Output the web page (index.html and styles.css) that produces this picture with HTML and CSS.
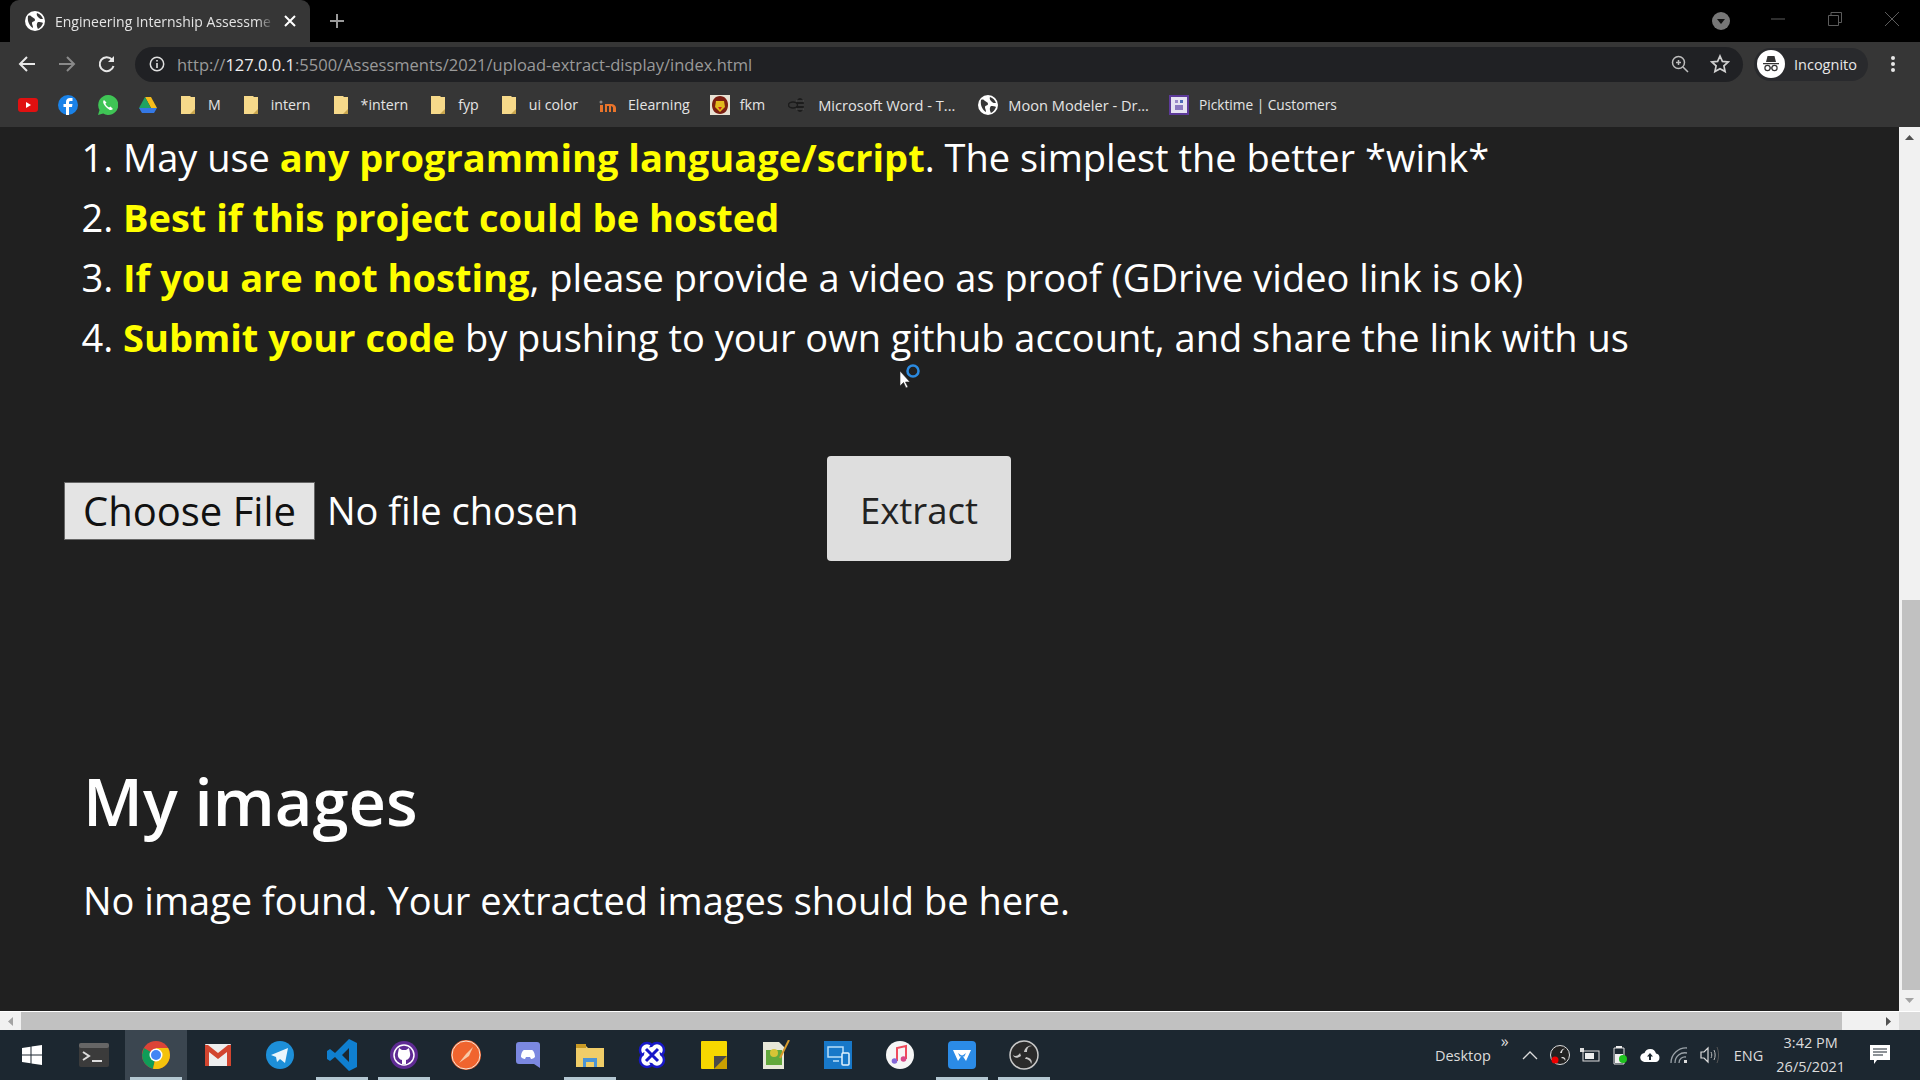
FILE: index.html
```html
<!DOCTYPE html>
<html lang="en">
<head>
    <meta charset="UTF-8">
    <title>Engineering Internship Assessment</title>
    <link rel="stylesheet" href="styles.css">
</head>
<body>
<svg class="defs" width="0" height="0">
    <symbol id="globe" viewBox="0 0 20 20">
        <circle cx="10" cy="10" r="10" fill="#fff"/>
        <path d="M3 5c2-1 3 0 4 1s3 1 3 3-3 1-3 3 1 2 1 5C5 15 2 11 3 5zM12 2c3 1 5 3 6 6-2 0-3 0-4-1s-3-3-2-5zM13 11c2 0 4 0 5 1-1 3-3 5-5 6-1-2-2-5 0-7z" fill="#363636"/>
    </symbol>
    <symbol id="folder" viewBox="0 0 20 20">
        <path d="M3 1h9l1 1h4v17H3z" fill="#f6d98a"/>
        <path d="M17 14v5h-5z" fill="#c9a64e"/>
    </symbol>
</svg>

<div class="tabstrip">
    <div class="tab">
        <svg class="favicon" width="20" height="20"><use href="#globe"/></svg>
        <span class="tab-title">Engineering Internship Assessme</span>
        <svg class="tab-close" width="12" height="12" viewBox="0 0 12 12"><path d="M1 1l10 10M11 1L1 11" stroke="#fff" stroke-width="2"/></svg>
    </div>
    <svg class="new-tab" width="16" height="16" viewBox="0 0 16 16"><path d="M8 1v14M1 8h14" stroke="#9a9a9a" stroke-width="2"/></svg>
    <svg class="tab-search" width="18" height="18" viewBox="0 0 18 18"><circle cx="9" cy="9" r="9" fill="#777"/><path d="M5 7h8l-4 5z" fill="#111"/></svg>
    <div class="win-buttons">
        <svg width="14" height="14" viewBox="0 0 14 14"><path d="M0 7h14" stroke="#5c5c5c"/></svg>
        <svg width="14" height="14" viewBox="0 0 14 14"><path d="M.5 3.500h10v10H.500zM3 3.500V.500h10.500v10h-3" fill="none" stroke="#5c5c5c"/></svg>
        <svg width="14" height="14" viewBox="0 0 14 14"><path d="M0 0l14 14M14 0L0 14" stroke="#5c5c5c"/></svg>
    </div>
</div>

<div class="toolbar">
    <svg class="nav-icon" width="18" height="18" viewBox="0 0 18 18"><path d="M17 9H2M9 2L2 9l7 7" fill="none" stroke="#e8e8e8" stroke-width="2"/></svg>
    <svg class="nav-icon" width="18" height="18" viewBox="0 0 18 18"><path d="M1 9h15M9 2l7 7-7 7" fill="none" stroke="#8a8a8a" stroke-width="2"/></svg>
    <svg class="nav-icon" width="18" height="18" viewBox="0 0 18 18"><path d="M15.500 11A7 7 0 1 1 14 4.500" fill="none" stroke="#e8e8e8" stroke-width="2"/><path d="M16 1v6h-6z" fill="#e8e8e8"/></svg>
    <div class="omnibox">
        <svg class="info" width="16" height="16" viewBox="0 0 16 16"><circle cx="8" cy="8" r="6.700" fill="none" stroke="#e0e0e0" stroke-width="1.500"/><path d="M8 7v5M8 4v1.600" stroke="#e0e0e0" stroke-width="1.600"/></svg>
        <span class="url">http://<b>127.0.0.1</b>:5500/Assessments/2021/upload-extract-display/index.html</span>
        <svg class="zoom-icon" width="18" height="18" viewBox="0 0 18 18"><circle cx="7.500" cy="7.500" r="6" fill="none" stroke="#bdbdbd" stroke-width="1.500"/><path d="M12 12l5 5M5 7.500h5M7.500 5v5" stroke="#bdbdbd" stroke-width="1.500"/></svg>
        <svg class="star" width="20" height="20" viewBox="0 0 20 20"><path d="M10 2l2.400 5.400 5.800.6-4.300 3.900 1.200 5.700L10 14.700l-5.100 2.900 1.200-5.700L1.800 8l5.800-.6z" fill="none" stroke="#d0d0d0" stroke-width="1.700"/></svg>
    </div>
    <div class="profile">
        <svg width="28" height="28" viewBox="0 0 28 28"><circle cx="14" cy="14" r="14" fill="#fff"/><path d="M9 12l1.500-6h7l1.500 6zM6 13h16v1.300H6z" fill="#333"/><circle cx="10.500" cy="18" r="2.600" fill="none" stroke="#333" stroke-width="1.200"/><circle cx="17.500" cy="18" r="2.600" fill="none" stroke="#333" stroke-width="1.200"/><path d="M13 18h2" stroke="#333"/></svg>
        <span>Incognito</span>
    </div>
    <svg class="kebab" width="4" height="16" viewBox="0 0 4 16"><circle cx="2" cy="2" r="2" fill="#e8e8e8"/><circle cx="2" cy="8" r="2" fill="#e8e8e8"/><circle cx="2" cy="14" r="2" fill="#e8e8e8"/></svg>
</div>

<div class="bookmarks">
    <svg class="bm-icon" width="20" height="20" viewBox="0 0 20 20"><rect y="3" width="20" height="14" rx="3" fill="#e01010"/><path d="M8 7l5 3-5 3z" fill="#fff"/></svg>
    <svg class="bm-icon" width="20" height="20" viewBox="0 0 20 20"><circle cx="10" cy="10" r="10" fill="#1a82e8"/><path d="M11 20v-8h3l.5-3H11V7.500c0-1 .5-1.500 1.500-1.500h2V3h-2.500C9.500 3 8 4.500 8 7v2H5.500v3H8v8z" fill="#fff"/></svg>
    <svg class="bm-icon" width="20" height="20" viewBox="0 0 20 20"><path d="M10 0a10 10 0 0 0-8.500 15L0 20l5.200-1.400A10 10 0 1 0 10 0z" fill="#3fc455"/><path d="M6 5c-2 2 0 5 2.500 7.500S13 16 15 14l-2.500-2.500-1.500 1c-1.500-.7-3-2.200-3.700-3.700L8.500 7.500z" fill="#fff"/></svg>
    <svg class="bm-icon" width="20" height="20" viewBox="0 0 20 20"><path d="M7 2h6l6 11h-6z" fill="#f5bc1c"/><path d="M7 2l6 11-3 5-9-5z" fill="#1ea362"/><path d="M1 13h18l-3 5H4z" fill="#3478e5"/></svg>
    <div class="bm"><svg width="20" height="20"><use href="#folder"/></svg><span>M</span></div>
    <div class="bm"><svg width="20" height="20"><use href="#folder"/></svg><span>intern</span></div>
    <div class="bm"><svg width="20" height="20"><use href="#folder"/></svg><span>*intern</span></div>
    <div class="bm"><svg width="20" height="20"><use href="#folder"/></svg><span>fyp</span></div>
    <div class="bm"><svg width="20" height="20"><use href="#folder"/></svg><span>ui color</span></div>
    <div class="bm"><svg width="20" height="20" viewBox="0 0 20 20"><circle cx="3" cy="7" r="1.500" fill="#888"/><path d="M2 10h3v7H2z" fill="#e9742b"/><path d="M7 17V9h6c3 0 5 2 5 4v4h-3v-4c0-1-1-2-2-2v6h-2v-6H9v6z" fill="#e9742b"/></svg><span>Elearning</span></div>
    <div class="bm"><svg width="20" height="20" viewBox="0 0 20 20"><rect width="20" height="20" fill="#e8e2d4"/><path d="M10 1c5 0 8 4 8 9s-3 9-8 9-8-4-8-9 3-9 8-9z" fill="#7b1f12"/><path d="M6 6h8l1 6-5 5-5-5z" fill="#e3b81e"/><path d="M8 12h4l-2 3z" fill="#c22"/></svg><span>fkm</span></div>
    <div class="bm bm-long"><svg width="20" height="20" viewBox="0 0 20 20"><ellipse cx="12" cy="10" rx="4" ry="7" fill="#1c1c1c"/><path d="M8 6h8M8 10h8M8 14h8" stroke="#555"/><ellipse cx="5" cy="10" rx="4.500" ry="3" fill="none" stroke="#1c1c1c" stroke-width="1.500"/></svg><span>Microsoft Word - T...</span></div>
    <div class="bm bm-long"><svg width="20" height="20"><use href="#globe"/></svg><span>Moon Modeler - Dr...</span></div>
    <div class="bm bm-narrow"><svg width="20" height="20" viewBox="0 0 20 20"><rect x="1" y="1" width="18" height="18" fill="#e6e3f2" stroke="#5d3a9a" stroke-width="2"/><rect x="6" y="5" width="3" height="3" fill="#9b8ac9"/><rect x="11" y="5" width="3" height="3" fill="#4f6bb8"/><rect x="6" y="10" width="8" height="5" fill="#8a78c0"/></svg><span>Picktime | Customers</span></div>
</div>

<div class="viewport">
    <main class="page">
        <ol class="rules">
            <li>May use <strong>any programming language/script</strong>. The simplest the better *wink*</li>
            <li><strong>Best if this project could be hosted</strong></li>
            <li><strong>If you are not hosting</strong>, please provide a video as proof (GDrive video link is ok)</li>
            <li><strong>Submit your code</strong> by pushing to your own github account, and share the link with us</li>
        </ol>
        <form class="upload">
            <div class="file-field">
                <button type="button" class="file-btn">Choose File</button>
                <span class="file-name">No file chosen</span>
            </div>
            <button type="button" class="extract-btn">Extract</button>
        </form>
        <h2 class="images-title">My images</h2>
        <p class="images-empty">No image found. Your extracted images should be here.</p>
    </main>
    <div class="vscroll">
        <svg class="arrow" width="21" height="21" viewBox="0 0 21 21"><path d="M6 13l4.500-5 4.500 5z" fill="#505050"/></svg>
        <div class="vthumb"></div>
        <svg class="arrow" width="21" height="21" viewBox="0 0 21 21"><path d="M6 8l4.500 5 4.500-5z" fill="#a3a3a3"/></svg>
    </div>
</div>
<div class="hscroll">
    <svg class="arrow" width="21" height="19" viewBox="0 0 21 19"><path d="M13 5l-5 4.500 5 4.500z" fill="#a3a3a3"/></svg>
    <div class="hthumb"></div>
    <svg class="arrow" width="21" height="19" viewBox="0 0 21 19"><path d="M8 5l5 4.500-5 4.500z" fill="#505050"/></svg>
    <div class="corner"></div>
</div>

<footer class="taskbar">
    <div class="task"><svg width="20" height="20" viewBox="0 0 20 20"><path d="M0 3l8.500-1.200v7.600H0zM9.500 1.600L20 0v9.400H9.500zM0 10.500h8.500v7.700L0 17zM9.500 10.500H20V20L9.500 18.400z" fill="#fff"/></svg></div>
    <div class="task"><svg width="30" height="24" viewBox="0 0 30 24"><rect width="30" height="24" rx="2" fill="#3b3b3b"/><rect width="30" height="5" rx="2" fill="#666"/><path d="M4 9l6 4-6 4" fill="none" stroke="#ddd" stroke-width="2"/><path d="M13 18h10" stroke="#ddd" stroke-width="2"/></svg></div>
    <div class="task is-open is-active"><svg width="28" height="28" viewBox="0 0 28 28"><circle cx="14" cy="14" r="14" fill="#db4437"/><path d="M14 14L1.900 7 0 14a14 14 0 0 0 11 13.700z" fill="#0f9d58"/><path d="M14 14l-3 13.700A14 14 0 0 0 28 14a14 14 0 0 0-1.900-7H14z" fill="#f4c20d"/><circle cx="14" cy="14" r="6.500" fill="#fff"/><circle cx="14" cy="14" r="5" fill="#4285f4"/></svg></div>
    <div class="task"><svg width="26" height="22" viewBox="0 0 26 22"><rect width="26" height="22" rx="1" fill="#eee"/><path d="M0 1v21h4V8l9 7 9-7v14h4V1h-3l-10 8L3 1z" fill="#d2452f"/></svg></div>
    <div class="task"><svg width="28" height="28" viewBox="0 0 28 28"><circle cx="14" cy="14" r="14" fill="#1d8fd8"/><path d="M5 14l17-7-3 15-5-4-3 3-1-5z" fill="#e9f5fc"/></svg></div>
    <div class="task is-open"><svg width="30" height="32" viewBox="0 0 30 32"><path d="M22 0l8 4v24l-8 4L8 18l-5 4-3-2v-8l3-2 5 4zm0 9l-7 7 7 7z" fill="#0f7fd0"/></svg></div>
    <div class="task is-open"><svg width="28" height="28" viewBox="0 0 28 28"><circle cx="14" cy="14" r="14" fill="#5f2b94"/><circle cx="14" cy="14" r="10" fill="none" stroke="#fff" stroke-width="1.500"/><path d="M9 7l3 2h4l3-2 1 5c1 4-2 7-4 7v4h-4v-4c-2 0-5-3-4-7z" fill="#fff"/></svg></div>
    <div class="task"><svg width="30" height="30" viewBox="0 0 30 30"><circle cx="15" cy="15" r="15" fill="#f0642e"/><circle cx="15" cy="15" r="14" fill="none" stroke="#f4e6da"/><path d="M8 23l7-9 7-7-4 9z" fill="#f7c9a8"/></svg></div>
    <div class="task"><svg width="24" height="26" viewBox="0 0 24 26"><path d="M3 0h18a3 3 0 0 1 3 3v23l-6-4H3a3 3 0 0 1-3-3V3a3 3 0 0 1 3-3z" fill="#7b88e0"/><path d="M5 15c0-4 2-7 3-7h8c1 0 3 3 3 7-2 2-4 2-4 2l-1-2h-4l-1 2s-2 0-4-2z" fill="#fff"/></svg></div>
    <div class="task is-open"><svg width="28" height="24" viewBox="0 0 28 24"><path d="M0 3h10l2 2h16v19H0z" fill="#f0cd68"/><path d="M7 15h14v9h-3v-5h-8v5H7z" fill="#4b94d6"/><path d="M0 1h10v4H0z" fill="#c99a25"/></svg></div>
    <div class="task"><svg width="28" height="30" viewBox="0 0 28 30"><circle cx="9" cy="10" r="7" fill="#fff" stroke="#1818c8" stroke-width="2.500"/><circle cx="19" cy="10" r="7" fill="#fff" stroke="#1818c8" stroke-width="2.500"/><circle cx="9" cy="20" r="7" fill="#fff" stroke="#1818c8" stroke-width="2.500"/><circle cx="19" cy="20" r="7" fill="#fff" stroke="#1818c8" stroke-width="2.500"/><circle cx="14" cy="15" r="8" fill="#fff"/><path d="M8 9l12 12M20 9L8 21" stroke="#1818c8" stroke-width="3"/></svg></div>
    <div class="task"><svg width="26" height="28" viewBox="0 0 26 28"><rect width="26" height="28" rx="1" fill="#f7d800"/><path d="M13 28l13-13v13z" fill="#c99f00"/><path d="M13 28V15h13z" fill="#4a4a4a"/></svg></div>
    <div class="task"><svg width="28" height="30" viewBox="0 0 28 30"><path d="M1 2h16l5 5v22H1z" fill="#e8e8d8"/><rect x="4" y="10" width="16" height="15" fill="#63a83c"/><circle cx="12" cy="13" r="4" fill="#d7c436"/><path d="M27 0l-9 18" stroke="#d79a2a" stroke-width="2"/></svg></div>
    <div class="task"><svg width="28" height="28" viewBox="0 0 28 28"><rect width="28" height="28" fill="#1878c8"/><path d="M4 6h15v10H4zM9 20h6" fill="none" stroke="#b9def7" stroke-width="1.500"/><rect x="18" y="12" width="7" height="12" rx="1" fill="#1878c8" stroke="#e4f3fd" stroke-width="1.500"/></svg></div>
    <div class="task"><svg width="28" height="28" viewBox="0 0 28 28"><circle cx="14" cy="14" r="14" fill="#f6f6f6"/><path d="M11 20V7l9-2v13" fill="none" stroke="#f04a5c" stroke-width="2"/><circle cx="8.500" cy="20" r="2.800" fill="#8568d8"/><circle cx="17.500" cy="18" r="2.800" fill="#d84a88"/></svg></div>
    <div class="task is-open"><svg width="28" height="28" viewBox="0 0 28 28"><rect width="28" height="28" rx="4" fill="#2b8be6"/><path d="M5 9h18l-5 11-4-6-4 6z" fill="#fff"/><path d="M10 12l4 3 4-3-2 4-2-2-2 2z" fill="#2b8be6"/></svg></div>
    <div class="task is-open"><svg width="30" height="30" viewBox="0 0 30 30"><circle cx="15" cy="15" r="14" fill="#2a2a2a" stroke="#c8c8c8" stroke-width="1.500"/><path d="M15 12c1-5 5-7 8-6-4 0-5 3-5 6zM17 17c5 1 7 4 5 7 0-3-3-5-6-5zM12 16c-4 3-7 2-8-1 2 2 5 1 7-2z" fill="#c8c8c8"/></svg></div>

    <div class="tray">
        <span class="tray-desktop">Desktop</span>
        <span class="tray-more">»</span>
        <svg class="tray-up" width="16" height="9" viewBox="0 0 16 9"><path d="M1 8l7-7 7 7" fill="none" stroke="#dcdcdc" stroke-width="1.300"/></svg>
        <svg width="20" height="20" viewBox="0 0 20 20"><circle cx="10" cy="10" r="9.500" fill="#222" stroke="#ddd"/><path d="M10 8c1-3 3-5 5-4-2 0-3 2-3 4zM12 12c3 0 4 2 3 4 0-2-2-3-4-3z" fill="#ddd"/><circle cx="5" cy="15" r="3.500" fill="#e00"/></svg>
        <svg width="20" height="16" viewBox="0 0 20 16"><rect x="3" y="4" width="16" height="10" fill="none" stroke="#ddd"/><rect x="5" y="6" width="9" height="6" fill="#eee"/><rect y="1" width="4" height="4" fill="#ddd"/></svg>
        <svg width="20" height="20" viewBox="0 0 20 20"><path d="M4 3h10v16H4z" fill="none" stroke="#ddd"/><path d="M6 1h6v2H6zM5 9h8v9H5z" fill="#eee"/><circle cx="13" cy="14" r="4" fill="#1fc21f"/></svg>
        <svg width="20" height="14" viewBox="0 0 20 14"><path d="M5 14a4.500 4.500 0 0 1-.5-9A6 6 0 0 1 16 5.500 4.300 4.300 0 0 1 15.500 14z" fill="#fff"/><path d="M10 5l-3 3.500h2V12h2V8.500h2z" fill="#1c2730"/></svg>
        <svg width="20" height="18" viewBox="0 0 20 18"><path d="M1 17A15 15 0 0 1 17 2M5 17A10 10 0 0 1 17 7M9 17a6 6 0 0 1 7-6" fill="none" stroke="#9aa2a8" stroke-width="1.300"/><rect x="14" y="14" width="3" height="3" fill="#ddd"/></svg>
        <svg width="20" height="18" viewBox="0 0 20 18"><path d="M1 6h3l4-4v14l-4-4H1z" fill="none" stroke="#ddd" stroke-width="1.200"/><path d="M11 6c1 2 1 4 0 6M14 4c1.500 3 1.500 7 0 10" fill="none" stroke="#bbb"/><path d="M17 1c2 5 2 11 0 16" fill="none" stroke="#555"/></svg>
        <span class="tray-lang">ENG</span>
        <div class="clock"><span>3:42 PM</span><span>26/5/2021</span></div>
        <svg class="tray-notes" width="22" height="22" viewBox="0 0 22 22"><path d="M1 1h20v15H8l-3 4v-4H1z" fill="#fff"/><path d="M4 5h14M4 8h14M4 11h10" stroke="#1c2730" stroke-width="1.200"/></svg>
    </div>
</footer>

<div class="cursor">
    <svg width="26" height="28" viewBox="0 0 26 28"><circle cx="14" cy="7" r="5.500" fill="none" stroke="#2b8ae0" stroke-width="2.500"/><path d="M1 7v15l3.500-3.500L7 24l2-1-2.500-5H11z" fill="#fff" stroke="#222" stroke-width=".6"/></svg>
</div>
</body>
</html>
```

FILE: styles.css
```css
* {
    box-sizing: border-box;
}
html, body {
    height: 100%;
}
body {
    margin: 0;
    display: flex;
    flex-direction: column;
    overflow: hidden;
    background-color: #202020;
    font-family: "Open Sans", "Noto Sans", sans-serif;
    color: #fff;
}
.defs {
    position: absolute;
}

/* browser chrome */
.tabstrip {
    height: 42px;
    flex: none;
    display: flex;
    align-items: center;
    padding-left: 10px;
    background-color: #000;
}
.tab {
    width: 300px;
    height: 42px;
    display: flex;
    align-items: center;
    padding: 0 14px 0 15px;
    border-radius: 9px 9px 0 0;
    background-color: #363636;
}
.tab-title {
    width: 219px;
    margin-left: 10px;
    white-space: nowrap;
    font-size: 14px;
    color: #e4e4e4;
    -webkit-mask-image: linear-gradient(to right, #000 92%, transparent);
    mask-image: linear-gradient(to right, #000 92%, transparent);
}
.tab-close {
    margin-left: 10px;
}
.new-tab {
    margin-left: 19px;
}
.tab-search {
    margin-left: auto;
}
.win-buttons {
    width: 190px;
    display: flex;
    justify-content: space-between;
    align-self: flex-start;
    padding: 12px 21px 0 41px;
}
.toolbar {
    height: 44px;
    flex: none;
    display: flex;
    align-items: center;
    padding: 0 18px 0 18px;
    background-color: #363636;
}
.nav-icon {
    margin-right: 22px;
}
.omnibox {
    width: 1608px;
    height: 35px;
    margin-left: -3px;
    display: flex;
    align-items: center;
    padding: 0 13px 0 14px;
    border-radius: 18px;
    background-color: #202124;
}
.url {
    margin-left: 12px;
    font-size: 16.500px;
    color: #9a9a9a;
    white-space: nowrap;
}
.url b {
    font-weight: 400;
    color: #eee;
}
.zoom-icon {
    margin-left: auto;
    margin-right: 21px;
}
.profile {
    width: 114px;
    height: 33px;
    margin-left: 11px;
    display: flex;
    align-items: center;
    gap: 9px;
    padding-left: 3px;
    border-radius: 17px;
    background-color: #292a2d;
    font-size: 14.500px;
    color: #e8e8e8;
}
.kebab {
    margin-left: 23px;
}
.bookmarks {
    height: 41px;
    flex: none;
    display: flex;
    align-items: center;
    gap: 20px;
    padding-left: 18px;
    padding-bottom: 4px;
    background-color: #363636;
    font-size: 14.200px;
    color: #e4e4e4;
}
.bm {
    display: flex;
    align-items: center;
    gap: 10px;
    white-space: nowrap;
}
.bm-long {
    margin-left: 3px;
    font-size: 14.600px;
}
.bm-narrow {
    font-size: 13.700px;
}

/* page */
.viewport {
    flex: 1;
    min-height: 0;
    display: flex;
}
.page {
    flex: 1;
    min-width: 0;
    overflow: hidden;
    background-color: #202020;
}
.rules {
    margin: 0;
    padding: 0 0 0 123px;
    font-size: 38px;
    line-height: 60px;
    white-space: nowrap;
}
.rules strong {
    font-weight: 700;
    color: #ff0;
}
.upload {
    display: flex;
    align-items: flex-start;
    margin-top: 89px;
    padding-left: 64px;
}
.file-field {
    width: 763px;
    margin-top: 26px;
    display: flex;
    align-items: center;
    gap: 12px;
}
.file-btn {
    width: 251px;
    height: 58px;
    padding: 0 0 2px;
    border: 1px solid #666;
    background-color: #e4e4e4;
    font-family: inherit;
    font-size: 40px;
    color: #111;
}
.file-name {
    font-size: 38px;
    margin-top: -2px;
}
.extract-btn {
    width: 184px;
    height: 105px;
    padding: 2px 0 0;
    border: none;
    border-radius: 4px;
    background-color: #dedede;
    font-family: inherit;
    font-size: 36.500px;
    color: #222;
}
.images-title {
    margin: 198px 0 0 83px;
    font-size: 65px;
    font-weight: 600;
    line-height: 84px;
}
.images-empty {
    margin: 32px 0 0 83px;
    font-size: 38px;
    line-height: 50px;
}

/* scrollbars */
.vscroll {
    width: 21px;
    flex: none;
    display: flex;
    flex-direction: column;
    background-color: #f1f1f1;
}
.arrow {
    flex: none;
}
.vthumb {
    height: 390px;
    margin: auto 0 0 3px;
    background-color: #c1c1c1;
}
.hscroll {
    height: 19px;
    flex: none;
    display: flex;
    align-items: stretch;
    border-top: 1px solid #fff;
    background-color: #f1f1f1;
}
.hthumb {
    width: 1821px;
    margin-right: 36px;
    background-color: #c1c1c1;
}
.corner {
    width: 21px;
    background-color: #dcdcdc;
}

/* windows taskbar */
.taskbar {
    height: 50px;
    flex: none;
    display: flex;
    padding-left: 1px;
    background-color: #1c2730;
}
.task {
    width: 62px;
    display: flex;
    align-items: center;
    justify-content: center;
    position: relative;
}
.is-active {
    background-color: #3b4650;
}
.is-open::after {
    content: "";
    position: absolute;
    left: 5px;
    right: 5px;
    bottom: 0;
    height: 3px;
    background-color: #b4c8d2;
}
.tray {
    flex: 1;
    display: flex;
    align-items: center;
    justify-content: flex-end;
    gap: 10px;
    padding-right: 29px;
    font-size: 14.500px;
    color: #dcdcdc;
}
.tray-more {
    align-self: flex-start;
    margin-right: 3px;
    font-size: 16px;
}
.tray-up {
    margin-right: 2px;
}
.tray-lang {
    margin-left: 4px;
}
.clock {
    display: flex;
    flex-direction: column;
    align-items: center;
    gap: 4px;
    margin-left: 3px;
}
.clock span {
    line-height: 20px;
}
.tray-notes {
    margin-left: 14px;
}

/* mouse pointer with the busy ring */
.cursor {
    position: absolute;
    left: 899px;
    top: 364px;
    line-height: 0;
}
```
